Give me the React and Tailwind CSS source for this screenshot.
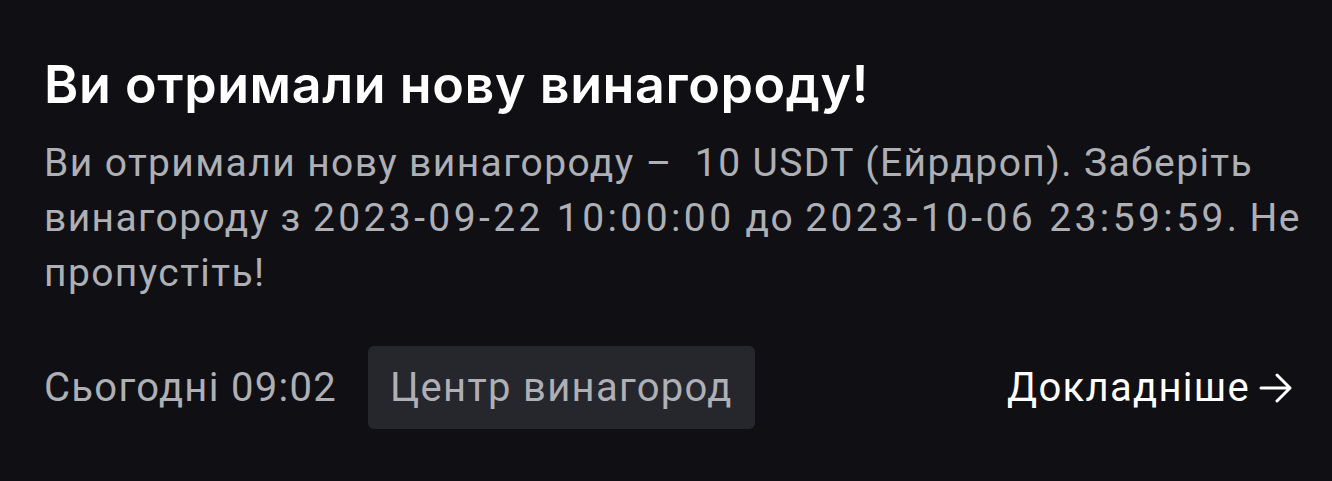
import React from 'react'

export default function App() {
  const num = 'tracking-[3.4px]'
  return (
    <div className="min-h-screen w-full bg-[#101014] pl-[44px] pr-[30px] pt-[54px] font-['Roboto','Noto_Sans',sans-serif]">
      <h1 className="font-['Inter','Roboto',sans-serif] text-[52px] leading-[62px] font-semibold tracking-[0.6px] text-white">
        Ви отримали нову винагороду!
      </h1>
      <p className="mt-[20px] whitespace-nowrap text-[39px] leading-[55px] tracking-[1.4px] text-[#aeb0b6]">
        Ви отримали нову винагороду –&nbsp; 10 USDT (Ейрдроп). Заберіть
        <br />
        винагороду з <span className={num}>2023-09-22 10:00:00</span> до <span className={num}>2023-10-06 23:59:59</span>. Не
        <br />
        пропустіть!
      </p>
      <div className="mt-[45px] mr-[8px] flex items-center">
        <span className="text-[40px] tracking-[1.3px] text-[#aeb0b6]">Сьогодні 09:02</span>
        <span className="ml-[31px] h-[83px] px-[22px] flex items-center rounded-[6px] bg-[#25272c] text-[40px] tracking-[1.3px] text-[#aeb0b6]">
          Центр винагород
        </span>
        <a className="ml-auto flex items-center gap-[8px] text-[40px] tracking-[1.3px] text-white">
          Докладніше
          <svg width="36" height="34" viewBox="0 0 36 34" fill="none" stroke="currentColor" strokeWidth="3" strokeLinecap="round" strokeLinejoin="round">
            <path d="M3 17h29M19 4l13 13-13 13" />
          </svg>
        </a>
      </div>
    </div>
  )
}
